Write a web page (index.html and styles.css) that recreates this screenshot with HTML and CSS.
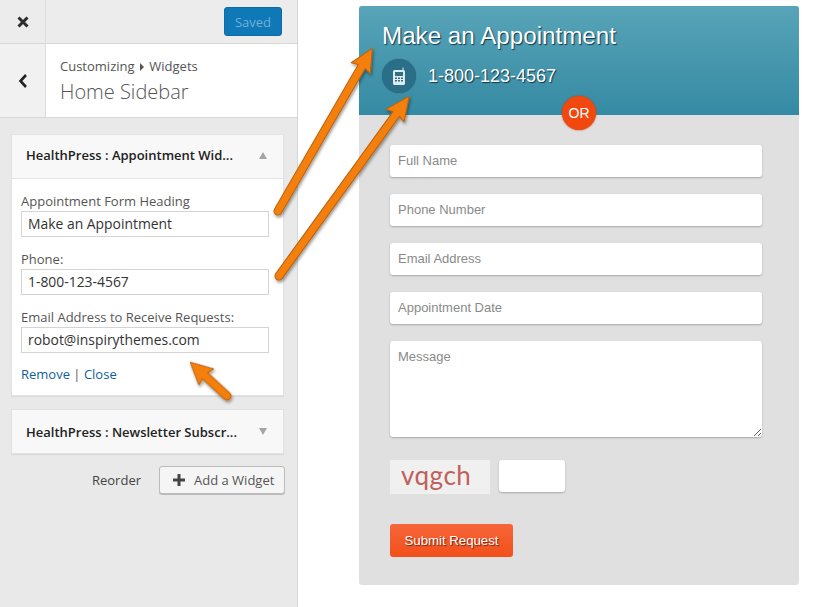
FILE: index.html
```html
<!DOCTYPE html>
<html lang="en">
<head>
    <meta charset="UTF-8">
    <meta name="viewport" content="width=device-width, initial-scale=1.0">
    <title>Home Sidebar</title>
    <link rel="stylesheet" href="styles.css">
</head>
<body>
    <div class="sidebar">
        <div class="topbar">
            <div class="close-box">
                <svg width="14" height="14" viewBox="0 0 14 14"><path d="M2.5 2.5L11.5 11.5M11.5 2.5L2.5 11.5" stroke="#2b2b2b" stroke-width="3"/></svg>
            </div>
            <button class="saved">Saved</button>
        </div>
        <div class="section-head">
            <div class="back-box">
                <svg width="10" height="16" viewBox="0 0 10 16"><path d="M8 2L2.5 8L8 14" fill="none" stroke="#222" stroke-width="2.6"/></svg>
            </div>
            <div class="section-title">
                <div class="crumbs">Customizing <span class="crumb-arrow"></span> Widgets</div>
                <div class="title">Home Sidebar</div>
            </div>
        </div>

        <div class="widget">
            <div class="widget-top">
                <span>HealthPress : Appointment Wid...</span>
                <span class="tri tri-up"></span>
            </div>
            <div class="widget-body">
                <label class="field-label">Appointment Form Heading</label>
                <input class="field" type="text" value="Make an Appointment">
                <label class="field-label">Phone:</label>
                <input class="field" type="text" value="1-800-123-4567">
                <label class="field-label">Email Address to Receive Requests:</label>
                <input class="field" type="text" value="robot@inspirythemes.com">
                <div class="widget-links"><a href="#">Remove</a> | <a href="#">Close</a></div>
            </div>
        </div>

        <div class="widget">
            <div class="widget-top">
                <span>HealthPress : Newsletter Subscr...</span>
                <span class="tri tri-down"></span>
            </div>
        </div>

        <div class="widget-actions">
            <span>Reorder</span>
            <button class="add-btn">
                <svg width="14" height="14" viewBox="0 0 14 14"><path d="M7 1V13M1 7H13" stroke="#444" stroke-width="3"/></svg>
                Add a Widget
            </button>
        </div>
    </div>

    <div class="main">
        <div class="panel">
            <div class="panel-head">
                <h2>Make an Appointment</h2>
                <div class="phone-row">
                    <span class="phone-icon">
                        <svg width="14" height="18" viewBox="0 0 14 18">
                            <path d="M10.5 0.5h1v3h-1z" fill="#dcecf0"/>
                            <rect x="1" y="3" width="12" height="15" rx="1.5" fill="#dcecf0"/>
                            <rect x="3" y="5" width="8" height="4" fill="#2f6e84"/>
                            <path d="M3 10.5h2v1.5h-2zM6 10.5h2v1.5h-2zM9 10.5h2v1.5h-2zM3 13h2v1.5h-2zM6 13h2v1.5h-2zM9 13h2v1.5h-2z" fill="#2f6e84"/>
                        </svg>
                    </span>
                    <span>1-800-123-4567</span>
                </div>
                <span class="or-badge">OR</span>
            </div>
            <form class="appt-form">
                <input class="appt-input" type="text" placeholder="Full Name">
                <input class="appt-input" type="text" placeholder="Phone Number">
                <input class="appt-input" type="text" placeholder="Email Address">
                <input class="appt-input" type="text" placeholder="Appointment Date">
                <textarea class="appt-input appt-message" placeholder="Message"></textarea>
                <div class="captcha-row">
                    <div class="captcha">vqgch</div>
                    <input class="appt-input captcha-input" type="text">
                </div>
                <button class="submit-btn" type="button">Submit Request</button>
            </form>
        </div>
    </div>

    <!-- orange callout arrows -->
    <svg class="arrows" width="815" height="607" viewBox="0 0 815 607">
        <defs>
            <filter id="arrow-shadow" x="-20%" y="-20%" width="140%" height="140%">
                <feDropShadow dx="1" dy="2" stdDeviation="1.5" flood-color="#000" flood-opacity="0.4"/>
            </filter>
        </defs>
        <g class="arrow" filter="url(#arrow-shadow)">
            <path transform="translate(278 211) rotate(-59.9)" d="M0 -4L167 -4L165 -11L188 0L165 11L167 4L0 4A4 4 0 0 1 0 -4Z"/>
            <path transform="translate(279 276) rotate(-54.1)" d="M0 -4L200 -4L198 -11L222 0L198 11L200 4L0 4A4 4 0 0 1 0 -4Z"/>
            <path transform="translate(227 396) rotate(-137.4)" d="M0 -4L30 -4L28 -11L50 0L28 11L30 4L0 4A4 4 0 0 1 0 -4Z"/>
        </g>
    </svg>
</body>
</html>
```

FILE: styles.css
```css
* {
    box-sizing: border-box;
}
body {
    margin: 0;
    width: 815px;
    height: 607px;
    overflow: hidden;
    display: flex;
    position: relative;
    background-color: #fff;
    font-family: "Open Sans", sans-serif;
    color: #444;
}
.sidebar {
    width: 298px;
    height: 607px;
    background-color: #e9e9e9;
    border-right: 1px solid #d6d6d6;
    font-size: 13px;
}
.topbar {
    height: 44px;
    display: flex;
    justify-content: space-between;
    align-items: flex-start;
    border-bottom: 1px solid #d8d8d8;
    background-color: #ececec;
}
.close-box {
    width: 46px;
    height: 43px;
    display: flex;
    align-items: center;
    justify-content: center;
    border-right: 1px solid #dcdcdc;
}
.saved {
    width: 58px;
    height: 29px;
    margin: 7px 15px 0 0;
    padding: 0;
    border: 1px solid #0d6ba6;
    border-radius: 3px;
    background-color: #0f78b6;
    color: #6fb1d8;
    font-family: inherit;
    font-size: 13px;
}
.section-head {
    height: 74px;
    display: flex;
    background-color: #fff;
    border-bottom: 1px solid #d8d8d8;
}
.back-box {
    width: 46px;
    display: flex;
    align-items: center;
    justify-content: center;
    background-color: #f1f1f1;
    border-right: 1px solid #dcdcdc;
}
.section-title {
    padding: 13px 0 0 14px;
}
.crumbs {
    font-size: 13px;
    line-height: 18px;
    color: #555;
}
.crumb-arrow {
    display: inline-block;
    margin: 0 2px;
    border-left: 4px solid #555;
    border-top: 4px solid transparent;
    border-bottom: 4px solid transparent;
}
.title {
    font-size: 20px;
    font-weight: 300;
    line-height: 34px;
    color: #555;
}
.widget {
    width: 273px;
    margin: 16px 0 0 11px;
    background-color: #fff;
    border: 1px solid #e2e2e2;
    box-shadow: 0 1px 1px rgba(0, 0, 0, 0.06);
}
.widget + .widget {
    margin-top: 13px;
}
.widget-top {
    height: 43px;
    padding: 0 15px 3px 14px;
    display: flex;
    justify-content: space-between;
    align-items: center;
    background-color: #f8f8f8;
    color: #222;
    font-weight: 600;
    font-size: 13px;
}
.widget + .widget .widget-top {
    padding-bottom: 0;
}
.tri {
    margin-right: 1px;
    border-left: 4.5px solid transparent;
    border-right: 4.5px solid transparent;
}
.tri-up {
    border-bottom: 7px solid #a5a5a5;
}
.tri-down {
    border-top: 7px solid #a5a5a5;
}
.widget-body {
    height: 217px;
    padding: 14px 15px 0 9px;
    border-top: 1px solid #e2e2e2;
}
.field-label {
    display: block;
    padding-bottom: 1px;
    font-size: 13px;
    line-height: 17px;
    color: #555;
}
.field {
    display: block;
    width: 248px;
    height: 26px;
    margin: 0 0 14px;
    padding: 0 6px 2px;
    border: 1px solid #d4d4d4;
    color: #333;
    font-family: inherit;
    font-size: 13.9px;
}
.widget-links {
    margin-top: -2px;
    line-height: 18px;
    font-size: 13px;
    color: #555;
}
.widget-links a {
    color: #0f5f9e;
    text-decoration: none;
}
.widget-actions {
    width: 274px;
    margin: 12px 0 0 11px;
    display: flex;
    justify-content: flex-end;
    align-items: center;
    gap: 18px;
    color: #444;
}
.add-btn {
    width: 126px;
    height: 28px;
    padding: 0 0 0 12px;
    display: flex;
    align-items: center;
    gap: 8px;
    border: 1px solid #bbb;
    border-radius: 3px;
    background-color: #f5f5f5;
    box-shadow: 0 1px 0 #bbb;
    color: #555;
    font-family: inherit;
    font-size: 13px;
}
.main {
    padding: 6px 0 0 61px;
}
.panel {
    width: 440px;
    height: 579px;
    background-color: #e0e0e0;
    border-radius: 3px;
    font-family: "Liberation Sans", Arial, sans-serif;
}
.panel-head {
    position: relative;
    height: 109px;
    padding: 15px 0 0 23px;
    border-radius: 3px 3px 0 0;
    background: linear-gradient(#58a4b8, #358aa3);
    color: #fff;
    text-shadow: 1px 1px 1px rgba(0, 40, 60, 0.85);
}
.panel-head h2 {
    margin: 0;
    font-size: 24.2px;
    font-weight: normal;
    line-height: 30px;
}
.phone-row {
    margin-top: 8px;
    display: flex;
    align-items: center;
    gap: 12px;
    font-size: 18px;
}
.phone-icon {
    width: 34px;
    height: 34px;
    display: flex;
    align-items: center;
    justify-content: center;
    border-radius: 50%;
    background-color: #2a6f87;
    box-shadow: 0 0 1px #22586c;
}
.or-badge {
    position: absolute;
    left: 203px;
    top: 90px;
    width: 34px;
    height: 34px;
    display: flex;
    align-items: center;
    justify-content: center;
    border-radius: 50%;
    background-color: #f0480f;
    box-shadow: 0 0 2px #b53a10;
    font-size: 14px;
    text-shadow: none;
}
.appt-form {
    padding: 30px 0 0 31px;
}
.appt-input {
    display: block;
    width: 372px;
    height: 32px;
    margin-bottom: 17px;
    padding: 0 8px 2px;
    border: none;
    border-radius: 3px;
    background-color: #fff;
    box-shadow: 0 1px 2px rgba(0, 0, 0, 0.25);
    font-family: inherit;
    font-size: 13px;
}
.appt-input::placeholder {
    color: #8a8a8a;
    opacity: 1;
}
.appt-message {
    height: 96px;
    padding-top: 8px;
    margin-bottom: 23px;
}
.captcha-row {
    display: flex;
    gap: 9px;
}
.captcha {
    width: 100px;
    height: 34px;
    padding-left: 11px;
    background-color: #f0f0f0;
    color: #c0605a;
    font-family: "Lato", sans-serif;
    font-size: 26px;
    line-height: 30px;
    letter-spacing: 0.5px;
}
.captcha-input {
    width: 66px;
    margin: 0;
}
.submit-btn {
    display: block;
    width: 123px;
    height: 33px;
    margin-top: 30px;
    padding: 0;
    border: none;
    border-radius: 3px;
    background: linear-gradient(#f6653a, #f2501a);
    color: #fff;
    font-family: inherit;
    font-size: 13.2px;
    text-shadow: 1px 1px 1px rgba(90, 20, 0, 0.85);
}
.arrows {
    position: absolute;
    left: 0;
    top: 0;
    pointer-events: none;
}
.arrow path {
    fill: #f57f0e;
    stroke: #b8620f;
    stroke-width: 1;
    stroke-linejoin: round;
}
```
